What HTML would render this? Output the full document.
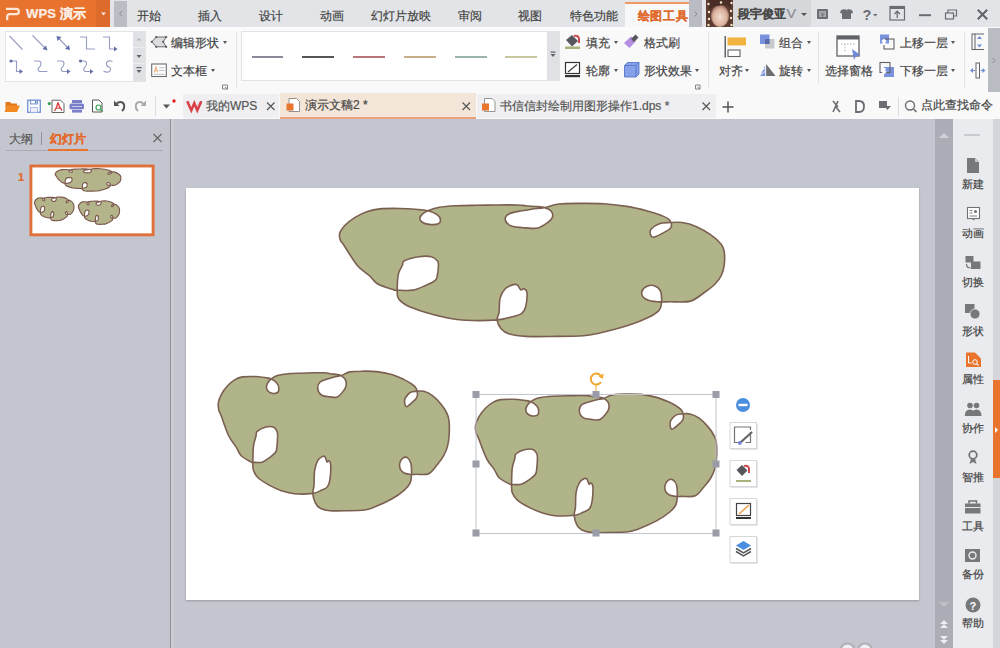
<!DOCTYPE html>
<html><head><meta charset="utf-8">
<style>
*{box-sizing:border-box;margin:0;padding:0}
html,body{width:1000px;height:648px;overflow:hidden;background:#c3c6ce;font-family:"Liberation Sans",sans-serif;font-size:12px;color:#333}
.a{position:absolute}
.t{position:absolute;white-space:nowrap;line-height:12px;-webkit-text-stroke:0.2px currentColor}
svg{position:absolute;left:0;top:0;overflow:visible}
</style></head><body>

<div class="a" style="left:0;top:0;width:1000px;height:27px;background:#e2e4e8"></div>
<div class="a" style="left:0;top:27px;width:1000px;height:4px;background:#fbfbfc"></div>
<div class="a" style="left:0;top:0;width:110px;height:27px;background:#e8732f"></div>
<div class="a" style="left:96px;top:0;width:14px;height:27px;background:#dd6b2b"></div>
<svg width="1000" height="30"><g fill="none" stroke="#fbe6d8" stroke-width="2.2">
<path d="M6,8.8 H16.3 Q18.8,8.8 18.8,11.3 V11.7 Q18.8,14.2 16.3,14.2 H9.7 Q7.2,14.2 7.2,16.7 V20.2"/></g>
<path d="M101,12.5 L106,12.5 L103.5,15.5Z" fill="#fbe6d8"/>
</svg>
<div class="t" style="left:26px;top:8px;color:#fcefe6;font-size:13px;font-weight:bold;letter-spacing:0.2px">WPS 演示</div>
<div class="a" style="left:114px;top:1px;width:13px;height:26px;background:#babdc4"></div>
<svg width="130" height="30"><path d="M122,11 L119.5,13.5 L122,16" fill="none" stroke="#8a8d94" stroke-width="1"/></svg>
<div class="t" style="left:137px;top:10px;color:#444;font-size:12px;">开始</div>
<div class="t" style="left:198px;top:10px;color:#444;font-size:12px;">插入</div>
<div class="t" style="left:259px;top:10px;color:#444;font-size:12px;">设计</div>
<div class="t" style="left:320px;top:10px;color:#444;font-size:12px;">动画</div>
<div class="t" style="left:371px;top:10px;color:#444;font-size:12px;">幻灯片放映</div>
<div class="t" style="left:458px;top:10px;color:#444;font-size:12px;">审阅</div>
<div class="t" style="left:518px;top:10px;color:#444;font-size:12px;">视图</div>
<div class="t" style="left:570px;top:10px;color:#444;font-size:12px;">特色功能</div>
<div class="a" style="left:625px;top:3px;width:64px;height:24px;background:#f7f8fa"></div>
<div class="a" style="left:625px;top:2px;width:64px;height:2px;background:#ee9866"></div>
<div class="t" style="left:637.5px;top:10px;color:#e06a2c;font-size:12px;font-weight:bold;letter-spacing:0.7px">绘图工具</div>
<div class="a" style="left:689px;top:0;width:13px;height:27px;background:#b9bcc3"></div>
<svg width="1000" height="30"><path d="M694.5,11.5 L697,14 L694.5,16.5" fill="none" stroke="#8a8d94" stroke-width="1"/></svg>
<svg width="1000" height="30">
<defs><radialGradient id="av" cx="0.5" cy="0.55" r="0.6"><stop offset="0" stop-color="#f3dcd0"/><stop offset="0.6" stop-color="#dcb4a0"/><stop offset="1" stop-color="#8a6050"/></radialGradient></defs>
<rect x="706" y="0" width="27" height="27" fill="#5c3b30"/>
<ellipse cx="720" cy="16" rx="9" ry="11" fill="url(#av)"/>
<path d="M709,0 H731 V8 Q726,4 720,5.5 Q713,6 709,10Z" fill="#4a2e26"/>
<g fill="#f4e8c8"><circle cx="708.5" cy="4" r="1.2"/><circle cx="709" cy="12" r="1.2"/><circle cx="709" cy="19" r="1.2"/><circle cx="708.5" cy="25" r="1.2"/><circle cx="731.5" cy="3" r="1.2"/><circle cx="731" cy="11" r="1.2"/><circle cx="731" cy="18" r="1.2"/><circle cx="731.5" cy="25" r="1.2"/><circle cx="721" cy="2.5" r="1.2"/></g>
</svg>
<div class="a" style="left:733px;top:0;width:78px;height:27px;background:#d5d7db"></div>
<div class="t" style="left:738px;top:8px;color:#4a4a4a;font-size:12px;font-weight:bold">段宇俊亚</div>
<div class="t" style="left:787px;top:8px;color:#8a8d94;font-size:13px;transform:scaleX(1.1)">V</div>
<div class="a" style="left:801px;top:13px;width:0;height:0;border-left:3.0px solid transparent;border-right:3.0px solid transparent;border-top:3.5px solid #555"></div>
<svg width="1000" height="30">
<g fill="#6b6d72">
<rect x="817" y="9" width="11" height="10" rx="1"/>
<path d="M841,10 L845,9 Q846.5,11 848,9 L852,10 L853,13 L851,13.5 V19 H842 V13.5 L840,13Z"/>
<path d="M902.5,14 l2.5,0 0,0" />
<path d="M919,14.2 H931 V16.2 H919Z"/>
</g>
<rect x="819" y="11" width="7" height="6" fill="#a9abb0"/>
<path d="M820.5,12 l2,2 2,-2 M822.5,14 v3 M820.5,15 h4" stroke="#6b6d72" stroke-width="0.8" fill="none"/>
<text x="862.5" y="19.5" font-size="14.5" font-weight="bold" fill="#6b6d72" font-family="Liberation Sans">?</text>
<path d="M873,14 h4.5 l-2.25,2.5z" fill="#6b6d72"/>
<rect x="890" y="6.5" width="14.5" height="13.5" fill="none" stroke="#6b6d72" stroke-width="1.2"/>
<rect x="890" y="6.5" width="14.5" height="2.5" fill="#6b6d72"/>
<path d="M897.2,18 V11.5 M894.5,14 L897.2,11.2 L900,14" fill="none" stroke="#6b6d72" stroke-width="1.3"/>
<rect x="945.5" y="13" width="8" height="6" fill="none" stroke="#6b6d72" stroke-width="1.2"/>
<path d="M948,13 V10 H956.5 V16 H953.5" fill="none" stroke="#6b6d72" stroke-width="1.2"/>
<path d="M977.8,9.8 L987.2,19.2 M987.2,9.8 L977.8,19.2" stroke="#5f6166" stroke-width="2"/>
</svg>
<div class="a" style="left:0;top:31px;width:1000px;height:61px;background:#f9f9fa"></div>
<div class="a" style="left:5px;top:31px;width:141px;height:51px;background:#fff;border:1px solid #e2e3e7"></div>
<div class="a" style="left:133px;top:32px;width:12px;height:49px;background:#dfe1e5"></div>
<div class="a" style="left:133px;top:47px;width:12px;height:1px;background:#eceef0"></div>
<div class="a" style="left:133px;top:63px;width:12px;height:1px;background:#eceef0"></div>
<svg width="1000" height="100"><g fill="none" stroke="#979dc2" stroke-width="1.1">
<path d="M9.5,36 L22.5,49.5"/>
<path d="M32.5,35.5 L46,49"/>
<path d="M58,37.5 L68.5,48.5"/>
<path d="M80,37 H86.5 V49 H95"/>
<path d="M103,37 H109.5 V49 H115.5"/>
<path d="M12,61 H16.5 V71.5 H21.5"/>
<path d="M34,61 H38.5 Q41,61 41,63.5 Q41,66 39,67.5 Q37,69.5 39.5,71.5 H47.5"/>
<path d="M57,61 H61.5 Q64,61 64,63.5 Q64,66 62,67.5 Q60,69.5 62.5,71.5 H69"/>
<path d="M81,61 H84 Q86.5,61 86.5,63.5 Q86.5,66 84.5,67.5 Q82.5,69.5 85,71.5 H92"/>
<path d="M112.5,61.5 Q108,59.5 106.5,63 Q106,66 109,67 Q112,68.5 109.5,71.5 Q107,73 103.5,71"/>
</g>
<g fill="#6470a8">
<path d="M47.5,50.5 L42.5,49 L46,45.5Z"/>
<path d="M56.5,36 L61.5,37 L57.5,41Z"/><path d="M70,50 L65,49 L69,45Z"/>
<path d="M117.5,49 L114,46.5 V51.5Z"/>
<circle cx="11" cy="61" r="1.6"/><path d="M23,71.5 L19.5,69 V74Z"/>
<path d="M70.5,71.5 L67,69 V74Z"/>
<circle cx="80.5" cy="61" r="1.6"/><path d="M93.5,71.5 L90,69 V74Z"/>
</g>
<g fill="#606368">
<path d="M136.5,40.5 L139,38 L141.5,40.5Z" fill="#b4b7bc"/>
<path d="M136.5,55 H141.5 L139,58Z"/>
<path d="M136.5,70 H141.5 L139,73Z"/><rect x="136.5" y="67" width="5" height="1.2"/>
</g>
</svg>
<svg width="1000" height="100">
<path d="M151.8,41.8 L156.2,37 H166.2 L163.2,41.8 L166.2,46.8 H156.2Z" fill="#dcdcde" stroke="#6a6c70" stroke-width="1"/><g fill="#55575b"><circle cx="151.8" cy="41.8" r="1.1"/><circle cx="156.2" cy="37" r="1.1"/><circle cx="166.2" cy="37" r="1.1"/><circle cx="163.2" cy="41.8" r="1.1"/><circle cx="166.2" cy="46.8" r="1.1"/><circle cx="156.2" cy="46.8" r="1.1"/></g>
<rect x="151.7" y="64" width="14.6" height="12.5" fill="#fff" stroke="#6a6c70" stroke-width="1.1"/>
<path d="M154.2,72.5 L156,66.8 L157.8,72.5 M154.9,70.7 H157.1" stroke="#f2b080" stroke-width="1.1" fill="none"/>
<path d="M159,67.8 H164.5 M159,70.5 H164.5 M154,74.3 H164.5" stroke="#b4b7bd" stroke-width="0.9"/>
<path d="M222.5,85 h5 v4 h-5z" fill="none" stroke="#777" stroke-width="0.9"/><path d="M225,87 l2.5,2" stroke="#777" stroke-width="0.9"/>
</svg>
<div class="t" style="left:171px;top:37px;color:#444;font-size:12px;">编辑形状</div>
<div class="a" style="left:223px;top:41px;width:0;height:0;border-left:2.5px solid transparent;border-right:2.5px solid transparent;border-top:3.0px solid #555"></div>
<div class="t" style="left:171px;top:65px;color:#444;font-size:12px;">文本框</div>
<div class="a" style="left:211px;top:69px;width:0;height:0;border-left:2.5px solid transparent;border-right:2.5px solid transparent;border-top:3.0px solid #555"></div>
<div class="a" style="left:236px;top:32px;width:1px;height:56px;background:#e0e2e6"></div>
<div class="a" style="left:241px;top:31px;width:319px;height:50px;background:#fff;border:1px solid #e2e3e7"></div>
<div class="a" style="left:547px;top:32px;width:12px;height:48px;background:#dfe1e5"></div>
<svg width="1000" height="100">
<g stroke-width="2">
<path d="M252,57 H283" stroke="#8e8898"/>
<path d="M302,57 H334" stroke="#555"/>
<path d="M353,57 H385" stroke="#b87478"/>
<path d="M404,57 H436" stroke="#c6b08a"/>
<path d="M455,57 H487" stroke="#9ab4ae"/>
<path d="M505,57 H537" stroke="#c8c8a0"/>
</g>
<path d="M550.5,54 H555.5 L553,57Z" fill="#606368"/><rect x="550.5" y="51.5" width="5" height="1.2" fill="#606368"/>
</svg>
<svg width="1000" height="100">
<path d="M566,40 L572,35 L578,41 L572,46.5Z" fill="#55575c"/>
<path d="M574,36 Q578,35 579,38.5 V43" fill="none" stroke="#d04a50" stroke-width="2"/>
<rect x="565" y="46.5" width="15" height="2.5" fill="#a9b27a"/>
<path d="M624,43 L631,36.5 L636,41 L629.5,48Z" fill="#b48ee0"/>
<path d="M631,39 L635.5,34.5 L638.5,37.5 L634,42Z" fill="#55575c"/>
<rect x="565.5" y="62.5" width="14" height="11" fill="#fff" stroke="#333" stroke-width="1.2"/>
<path d="M568,72 L577,64.5" stroke="#444" stroke-width="1.3"/>
<rect x="565" y="75" width="15" height="2.2" fill="#333"/>
<path d="M624.5,65.5 L627.5,62.5 H639 V74 L636,77 H624.5Z" fill="#86a0ea" stroke="#5577cc" stroke-width="0.9"/>
<path d="M624.5,65.5 H636 V77 M636,65.5 L639,62.5" fill="none" stroke="#5577cc" stroke-width="0.9"/>
<path d="M695.5,85 h4.5 v4 h-4.5z" fill="none" stroke="#777" stroke-width="0.9"/><path d="M697.5,87 l2.5,2" stroke="#777" stroke-width="0.9"/>
</svg>
<div class="t" style="left:586px;top:37px;color:#444;font-size:12px;">填充</div>
<div class="a" style="left:614px;top:41px;width:0;height:0;border-left:2.5px solid transparent;border-right:2.5px solid transparent;border-top:3.0px solid #555"></div>
<div class="t" style="left:644px;top:37px;color:#444;font-size:12px;">格式刷</div>
<div class="t" style="left:586px;top:65px;color:#444;font-size:12px;">轮廓</div>
<div class="a" style="left:614px;top:69px;width:0;height:0;border-left:2.5px solid transparent;border-right:2.5px solid transparent;border-top:3.0px solid #555"></div>
<div class="t" style="left:644px;top:65px;color:#444;font-size:12px;">形状效果</div>
<div class="a" style="left:695px;top:69px;width:0;height:0;border-left:2.5px solid transparent;border-right:2.5px solid transparent;border-top:3.0px solid #555"></div>
<div class="a" style="left:708px;top:32px;width:1px;height:56px;background:#e0e2e6"></div>
<svg width="1000" height="100">
<rect x="724.5" y="36" width="1.5" height="21.5" fill="#606368"/>
<rect x="727.5" y="37.5" width="18.5" height="8" fill="#f2b440"/>
<rect x="728" y="50" width="12" height="6.5" fill="#fff" stroke="#606368" stroke-width="1.1"/>
<rect x="765" y="39" width="9.5" height="9.5" fill="#c8c9cc"/>
<rect x="760" y="34.5" width="9.5" height="9.5" fill="#7a92dd"/>
<rect x="765" y="39" width="4.5" height="5" fill="#5a6aa8"/>
<path d="M766.2,76 V64 L775.5,76Z" fill="#6a6c70"/>
<path d="M760.2,76 L765.2,65.5 V76Z" fill="#7a92dd"/>
<path d="M761.5,74.5 L765.5,71 M763,70 L765.5,68" stroke="#fff" stroke-width="0.9"/>
<rect x="837" y="36" width="22" height="20" fill="#fff" stroke="#606368" stroke-width="1.3"/>
<rect x="837" y="36" width="22" height="3.5" fill="#606368"/>
<path d="M841,44 h14 M845,44 v9" stroke="#a0a4ac" stroke-width="0.8" stroke-dasharray="1.5 1.5"/>
<path d="M852,49 L860.5,55 L856,56 L854,60Z" fill="#6f8ad8"/>
<rect x="880" y="34.5" width="9" height="9" fill="#7a92dd"/>
<rect x="884" y="39" width="10" height="10" fill="none" stroke="#606368" stroke-width="1.1"/>
<path d="M884,38.5 L887,41.5 H885.5 V45 H882.5 V41.5 H881Z" fill="#fff"/>
<rect x="884" y="67" width="10" height="10" fill="#7a92dd"/>
<rect x="880" y="62.5" width="10" height="10" fill="none" stroke="#606368" stroke-width="1.1"/>
<path d="M887,71.5 L884,74.5 L881,71.5 H882.5 V68 H885.5 V71.5Z" fill="#fff"/>
<rect x="972" y="34" width="3" height="15.5" fill="none" stroke="#606368" stroke-width="1"/>
<path d="M975,34 H984 M975,49.5 H984" stroke="#606368" stroke-width="1"/>
<path d="M979.5,36 L982,39 H977Z M979.5,47.5 L982,44.5 H977Z" fill="#6f8ad8"/>
<rect x="976" y="63" width="3.5" height="15" fill="#fff" stroke="#606368" stroke-width="1"/>
<path d="M970,70.5 L973,68 V73Z M985.5,70.5 L982.5,68 V73Z" fill="#6f8ad8"/><path d="M971,70.5 H975 M980.5,70.5 H985" stroke="#6f8ad8" stroke-width="1"/>
</svg>
<div class="t" style="left:719px;top:65px;color:#444;font-size:12px;">对齐</div>
<div class="a" style="left:745px;top:69px;width:0;height:0;border-left:2.5px solid transparent;border-right:2.5px solid transparent;border-top:3.0px solid #555"></div>
<div class="t" style="left:779px;top:37px;color:#444;font-size:12px;">组合</div>
<div class="a" style="left:807px;top:41px;width:0;height:0;border-left:2.5px solid transparent;border-right:2.5px solid transparent;border-top:3.0px solid #555"></div>
<div class="t" style="left:779px;top:65px;color:#444;font-size:12px;">旋转</div>
<div class="a" style="left:807px;top:69px;width:0;height:0;border-left:2.5px solid transparent;border-right:2.5px solid transparent;border-top:3.0px solid #555"></div>
<div class="a" style="left:818px;top:32px;width:1px;height:52px;background:#e0e2e6"></div>
<div class="t" style="left:825px;top:65px;color:#444;font-size:12px;">选择窗格</div>
<div class="t" style="left:900px;top:37px;color:#444;font-size:12px;">上移一层</div>
<div class="a" style="left:951px;top:41px;width:0;height:0;border-left:2.5px solid transparent;border-right:2.5px solid transparent;border-top:3.0px solid #555"></div>
<div class="t" style="left:900px;top:65px;color:#444;font-size:12px;">下移一层</div>
<div class="a" style="left:951px;top:69px;width:0;height:0;border-left:2.5px solid transparent;border-right:2.5px solid transparent;border-top:3.0px solid #555"></div>
<div class="a" style="left:964px;top:32px;width:1px;height:56px;background:#e0e2e6"></div>
<div class="a" style="left:988px;top:28px;width:12px;height:64px;background:#b9bcc3"></div>
<svg width="1000" height="100"><path d="M992.5,58 L995,60.5 L992.5,63" fill="none" stroke="#8a8d94" stroke-width="1"/></svg>
<div class="a" style="left:0;top:92px;width:1000px;height:27px;background:#f9f9fa"></div>
<svg width="1000" height="130">
<path d="M5.5,102 H10 L11.5,103.5 H17 V106 H7.5 L5.5,111Z" fill="#e07a1a"/>
<path d="M7.5,105.5 H20 L17,112 H4.5Z" fill="#f18a22"/>
<rect x="27.7" y="100.3" width="12.6" height="12" fill="#fff" stroke="#7b98d6" stroke-width="1.4"/>
<rect x="30.5" y="100.3" width="7" height="3.6" fill="#fff" stroke="#7b98d6" stroke-width="1.1"/>
<rect x="35" y="101" width="1.3" height="2.2" fill="#5a70b0"/>
<rect x="30.5" y="107.5" width="7" height="4.8" fill="#eef1fa" stroke="#9bb0e0" stroke-width="0.8"/>
<path d="M52,100.2 H60.5 L64,103.7 V112.5 H52Z" fill="#fff" stroke="#666" stroke-width="1"/>
<path d="M54.5,111 Q57,107 58,102.5 Q59,107 62,110.5 M55.5,108.5 Q58,107.5 61,108.5" fill="none" stroke="#d83a3a" stroke-width="1.2"/>
<circle cx="49.3" cy="103.6" r="1.6" fill="#3aa050"/>
<rect x="72" y="100" width="10" height="3" fill="#7b7ec8"/>
<rect x="69.5" y="103.5" width="14.5" height="5.8" rx="1.5" fill="#7b7ec8"/>
<rect x="72" y="106" width="10" height="1" fill="#c8caf0"/>
<rect x="72" y="109.8" width="10" height="2.8" fill="#7b7ec8"/>
<path d="M92.5,100 H99 L102,103 V112 H92.5Z" fill="#fff" stroke="#555" stroke-width="1"/>
<circle cx="98.5" cy="107.5" r="2.5" fill="none" stroke="#3aa050" stroke-width="1.2"/><path d="M100.5,109.5 l2,2" stroke="#3aa050" stroke-width="1.3"/>
<path d="M122,111 Q125,108.5 124,104.5 Q122.5,101 118,102.5 L116.5,104" fill="none" stroke="#555" stroke-width="2"/>
<path d="M114,100.5 V106 H119.5Z" fill="#555"/>
<path d="M138,111 Q135,108.5 136,104.5 Q137.5,101 142,102.5 L143.5,104" fill="none" stroke="#aaa" stroke-width="2"/>
<path d="M146,100.5 V106 H140.5Z" fill="#aaa"/>
<rect x="155" y="96" width="1" height="20" fill="#dcdde0"/>
<path d="M163,104.5 H170 L166.5,108.5Z" fill="#555"/>
<circle cx="174" cy="101" r="1.7" fill="#e02020"/>
</svg>
<div class="a" style="left:183px;top:94px;width:96px;height:24px;background:#efeff1"></div>
<div class="a" style="left:280px;top:93px;width:196px;height:25px;background:#f3e6d9"></div>
<div class="a" style="left:280px;top:116.5px;width:196px;height:2px;background:#e9a27a"></div>
<div class="a" style="left:477px;top:94px;width:239px;height:24px;background:#efeff1"></div>
<svg width="1000" height="130">
<path d="M187.3,101.3 L191.3,110.2 L194.3,103.2 L197.3,110.2 L201.3,101.3" fill="none" stroke="#d8404a" stroke-width="2.6" stroke-linejoin="miter"/><path d="M189.7,102.5 L191.4,106.5 M198.5,102.5 L197.2,105.8" stroke="#f4c8c8" stroke-width="0.8"/>
<g stroke="#555" stroke-width="1.2"><path d="M267,102.5 L274.5,110 M274.5,102.5 L267,110"/><path d="M462.5,102.5 L470,110 M470,102.5 L462.5,110"/><path d="M702.5,102.5 L710,110 M710,102.5 L702.5,110"/></g>
<path d="M728,101.5 V112.5 M722.5,107 H733.5" stroke="#555" stroke-width="1.5"/>
<g><path d="M289,98.5 H296.5 L299.5,101.5 V111.5 H289Z" fill="#fff" stroke="#888" stroke-width="0.9"/>
<rect x="286.5" y="103.5" width="7" height="7" fill="#e8742e"/></g>
<g><path d="M484.5,98.5 H492 L495,101.5 V111.5 H484.5Z" fill="#fff" stroke="#888" stroke-width="0.9"/>
<rect x="482" y="103.5" width="7" height="7" fill="#e8742e"/></g>
</svg>
<div class="t" style="left:206px;top:100px;color:#555;font-size:12px;">我的WPS</div>
<div class="t" style="left:305px;top:99px;color:#444;font-size:12px;">演示文稿2 *</div>
<div class="t" style="left:500px;top:100px;color:#555;font-size:12px;">书信信封绘制用图形操作1.dps *</div>
<svg width="1000" height="130">
<path d="M833,101 L838,107 M838,101 L833,112 M835,106 L840,112" stroke="#6b6d72" stroke-width="1.6" fill="none"/>
<path d="M856,101 H859 Q864,101 864,106.5 Q864,112 859,112 H856Z" fill="none" stroke="#6b6d72" stroke-width="1.8"/>
<rect x="879" y="101" width="8" height="7" fill="#6b6d72"/><path d="M884,106 H891 L887.5,110Z" fill="#6b6d72"/>
<rect x="898" y="97" width="1" height="19" fill="#dcdde0"/>
<circle cx="910" cy="105.5" r="4.5" fill="none" stroke="#6b6d72" stroke-width="1.4"/><path d="M913.5,109 l3,3" stroke="#6b6d72" stroke-width="1.6"/>
</svg>
<div class="t" style="left:921px;top:99px;color:#444;font-size:12px;">点此查找命令</div>
<div class="a" style="left:0;top:119px;width:1000px;height:529px;background:#c3c6ce"></div>
<div class="a" style="left:170px;top:119px;width:1px;height:529px;background:#8f929a"></div>
<div class="t" style="left:8.5px;top:133px;color:#555;font-size:12px;">大纲</div>
<div class="a" style="left:41px;top:132px;width:1px;height:13px;background:#8f929a"></div>
<div class="t" style="left:50px;top:133px;color:#e4692a;font-size:12px;font-weight:bold">幻灯片</div>
<svg width="1000" height="160"><path d="M153.5,134 L161.5,142 M161.5,134 L153.5,142" stroke="#666" stroke-width="1.2"/></svg>
<div class="a" style="left:6px;top:150px;width:157px;height:1px;background:#a9acb4"></div>
<div class="a" style="left:48px;top:149px;width:40px;height:2px;background:#e8742e"></div>
<div class="t" style="left:18px;top:171px;color:#e26a2a;font-size:11px;font-weight:bold">1</div>
<div class="a" style="left:30px;top:165px;width:124px;height:71px;background:#fff"></div>
<div class="a" style="left:171px;top:119px;width:3px;height:529px;background:#c9ccd3"></div>
<div class="a" style="left:186px;top:188px;width:733px;height:412px;background:#fff;box-shadow:0 1px 2px rgba(0,0,0,0.22)"></div>
<div class="a" style="left:935px;top:119px;width:18px;height:529px;background:#abaeb6"></div>
<svg width="1000" height="648">
<path d="M939,138 L944,133 L949,138Z" fill="#d0d2d8"/>
<path d="M939,602 L944,607 L949,602Z" fill="#bfc1c7"/>
<path d="M940,624 L944,620 L948,624Z M940,628 L944,624 L948,628Z" fill="#eceef2"/>
<path d="M940,636 L944,640 L948,636Z M940,640 L944,644 L948,640Z" fill="#eceef2"/>
</svg>
<div class="a" style="left:953px;top:119px;width:40px;height:529px;background:#e9ebee"></div>
<div class="a" style="left:993px;top:119px;width:7px;height:529px;background:#d3d5da"></div>
<div class="a" style="left:993px;top:380px;width:7px;height:98px;background:#e8742e"></div>
<div class="a" style="left:964px;top:134px;width:16px;height:1.5px;background:#c8cacf"></div>
<div class="t" style="left:962px;top:178px;color:#444;font-size:11px;">新建</div>
<div class="t" style="left:962px;top:227px;color:#444;font-size:11px;">动画</div>
<div class="t" style="left:962px;top:276px;color:#444;font-size:11px;">切换</div>
<div class="t" style="left:962px;top:325px;color:#444;font-size:11px;">形状</div>
<div class="t" style="left:962px;top:373px;color:#444;font-size:11px;">属性</div>
<div class="t" style="left:962px;top:422px;color:#444;font-size:11px;">协作</div>
<div class="t" style="left:962px;top:471px;color:#444;font-size:11px;">智推</div>
<div class="t" style="left:962px;top:520px;color:#444;font-size:11px;">工具</div>
<div class="t" style="left:962px;top:568px;color:#444;font-size:11px;">备份</div>
<div class="t" style="left:962px;top:617px;color:#444;font-size:11px;">帮助</div>
<svg width="1000" height="648">
<g fill="#77787c">
<path d="M967,158 H975 L979,162 V173 H967Z"/>
<rect x="967.5" y="207.5" width="12" height="11" fill="#fff" stroke="#717276" stroke-width="1.1"/>
<path d="M969.5,210.5 h3 M969.5,213 h3 M969.5,216 h7.5" stroke="#717276" stroke-width="0.9" fill="none"/>
<circle cx="975.5" cy="211.5" r="1.6"/>
<path d="M971.5,218.5 l2,2 2,-2z"/>
<rect x="965.5" y="256" width="8" height="6.5"/><rect x="971" y="261.5" width="9.5" height="7.5"/>
<path d="M966.5,264 Q966.5,268 970.5,268" fill="none" stroke="#717276" stroke-width="1.2"/>
<rect x="965" y="304" width="9.5" height="9"/><circle cx="975" cy="314" r="5" stroke="#e9ebee" stroke-width="0.8"/>
<path d="M966,352.5 H975 L981,358.5 V367 H966Z" fill="#e8742e"/>
<circle cx="970" cy="405.5" r="2.8"/><circle cx="976.5" cy="405.5" r="2.8"/>
<path d="M964.8,416 Q964.8,409.5 970,409.5 Q975.2,409.5 975.2,416Z M971.5,416 Q971.5,409.5 976.5,409.5 Q981.5,409.5 981.5,416Z"/>
<circle cx="973" cy="455" r="3.8" fill="none" stroke="#717276" stroke-width="1.7"/>
<path d="M971,458.5 L969.5,464 L973,462 L976.5,464 L975,458.5Z"/>
<rect x="965" y="503.5" width="15.5" height="10"/><path d="M969,503.5 V501 H976.5 V503.5" fill="none" stroke="#717276" stroke-width="1.5"/>
<rect x="965" y="507" width="15.5" height="1" fill="#e9ebee"/>
<rect x="965" y="549" width="15" height="13"/>
<circle cx="973" cy="605" r="7.5"/>
</g>
<circle cx="972.5" cy="555.5" r="3.5" fill="none" stroke="#e9ebee" stroke-width="1.4"/>
<path d="M975,158 L979,162 H975Z" fill="#c5c7cb"/>
<text x="969.5" y="609.5" font-size="11" font-weight="bold" fill="#fff" font-family="Liberation Sans">?</text>
<circle cx="975" cy="362" r="2.3" fill="none" stroke="#fff" stroke-width="1"/><path d="M976.6,363.6 l2,2" stroke="#fff" stroke-width="1.1"/>
<path d="M968.5,356 v7 h3" fill="none" stroke="#fff" stroke-width="1"/>
<path d="M995,427 L998,430 L995,433Z" fill="#fff"/>
</svg>
<svg width="1000" height="648">
<defs><path id="shp" d="M220.8,414.8 C219.2,410.5 219.3,412.4 218.9,410.4 C218.5,408.4 217.9,405.7 218.3,403.0 C218.7,400.3 219.9,397.3 221.4,394.4 C222.9,391.5 225.3,388.3 227.6,385.8 C229.9,383.3 232.5,381.1 235.0,379.6 C237.5,378.1 239.1,377.4 242.4,376.9 C245.7,376.4 250.8,376.4 254.7,376.5 C258.6,376.6 263.1,377.3 265.9,377.7 C268.7,378.1 269.5,378.1 271.4,379.0 C273.2,379.9 275.8,381.8 277.0,383.3 C278.2,384.8 278.7,386.7 278.8,388.2 C278.9,389.7 278.7,391.7 277.6,392.5 C276.5,393.3 273.6,393.5 272.0,393.2 C270.4,392.9 268.6,391.8 267.7,390.7 C266.8,389.6 266.4,387.8 266.5,386.4 C266.6,384.9 267.4,383.4 268.3,382.0 C269.2,380.6 270.4,379.4 272.0,378.3 C273.6,377.2 275.5,376.1 278.2,375.3 C280.9,374.5 284.3,374.1 288.0,373.7 C291.7,373.3 296.3,373.3 300.4,373.2 C304.5,373.1 308.7,372.9 312.8,372.8 C316.9,372.7 322.1,372.7 325.0,372.8 C327.9,372.9 327.9,373.4 330.0,373.7 C332.1,374.0 335.5,374.3 337.4,374.6 C339.2,374.9 339.8,374.8 341.1,375.6 C342.4,376.4 344.6,377.9 345.4,379.6 C346.2,381.3 346.3,384.0 346.0,385.8 C345.7,387.6 345.0,388.9 343.6,390.7 C342.2,392.5 339.7,395.9 337.4,396.9 C335.1,397.9 332.7,397.2 330.0,396.9 C327.3,396.6 323.4,396.4 321.4,395.0 C319.3,393.6 317.9,390.4 317.7,388.2 C317.5,386.0 318.5,383.5 320.2,382.0 C321.9,380.5 325.3,379.8 327.6,379.0 C329.9,378.2 331.8,377.7 334.0,377.1 C336.2,376.5 338.5,376.5 341.1,375.6 C343.7,374.7 346.5,372.6 349.8,371.9 C353.1,371.2 356.4,371.2 360.9,371.2 C365.4,371.1 371.8,371.0 376.9,371.6 C382.0,372.2 387.2,373.3 391.7,374.6 C396.2,375.9 400.8,378.1 404.1,379.6 C407.4,381.2 409.4,382.4 411.5,383.9 C413.6,385.4 415.5,386.6 416.4,388.8 C417.3,391.0 417.8,394.5 417.0,396.9 C416.2,399.3 413.2,401.4 411.5,403.0 C409.8,404.6 407.6,406.7 406.5,406.7 C405.4,406.7 404.9,404.4 404.7,403.0 C404.5,401.6 404.4,399.9 405.3,398.1 C406.2,396.4 408.4,393.6 410.2,392.5 C412.0,391.4 414.1,391.5 416.4,391.3 C418.7,391.1 421.1,390.6 423.8,391.3 C426.5,392.0 429.6,393.4 432.5,395.6 C435.4,397.8 438.6,401.2 441.1,404.3 C443.6,407.4 446.0,411.2 447.3,414.1 C448.6,417.0 448.8,418.0 449.1,421.6 C449.4,425.2 449.4,431.8 449.1,436.0 C448.8,440.2 448.2,443.8 447.3,447.1 C446.4,450.4 445.2,452.9 443.6,455.8 C442.0,458.7 439.9,461.4 437.4,464.4 C434.9,467.4 432.3,472.0 428.8,473.7 C425.3,475.4 419.4,474.2 416.4,474.3 C413.4,474.4 412.9,474.7 410.9,474.5 C408.8,474.3 405.9,473.9 404.1,473.0 C402.4,472.1 401.1,470.9 400.4,469.3 C399.7,467.7 399.4,465.1 399.8,463.2 C400.2,461.3 401.6,459.1 402.8,458.2 C404.0,457.3 405.9,456.8 407.2,457.6 C408.5,458.4 410.2,460.4 410.9,463.2 C411.6,466.0 411.6,471.2 411.5,474.5 C411.4,477.8 411.4,480.3 410.2,482.9 C409.0,485.5 407.2,487.6 404.1,490.3 C401.0,493.0 396.9,496.1 391.7,499.0 C386.5,501.9 377.7,505.8 373.2,507.6 C368.7,509.4 368.7,509.5 364.6,510.0 C360.5,510.5 354.3,510.6 348.5,510.7 C342.7,510.8 334.7,511.1 330.0,510.7 C325.3,510.3 322.7,509.5 320.2,508.2 C317.7,506.9 316.4,505.2 315.2,502.7 C314.0,500.2 313.0,496.3 312.8,493.4 C312.6,490.5 313.7,489.2 314.0,485.4 C314.3,481.6 314.0,474.7 314.6,470.6 C315.2,466.5 316.4,463.1 317.7,460.7 C319.0,458.3 321.4,457.0 322.6,456.4 C323.8,455.8 324.4,456.1 325.1,457.0 C325.8,457.9 326.4,461.3 327.0,461.9 C327.6,462.5 328.2,460.3 328.8,460.7 C329.4,461.1 330.5,461.3 330.7,464.4 C330.9,467.5 330.5,475.5 330.0,479.2 C329.5,482.9 329.0,484.8 327.6,486.6 C326.2,488.5 323.9,489.2 321.4,490.3 C318.9,491.4 317.3,492.8 312.8,493.4 C308.3,494.0 299.4,494.2 294.2,493.8 C289.0,493.4 286.0,492.3 281.9,490.9 C277.8,489.5 273.5,487.5 269.6,485.4 C265.7,483.2 261.1,480.5 258.4,478.0 C255.7,475.5 254.4,473.2 253.5,470.6 C252.6,468.0 252.9,466.3 252.9,462.2 C252.9,458.1 253.0,450.3 253.5,445.9 C254.0,441.5 255.4,438.4 256.0,436.0 C256.6,433.6 255.5,432.9 257.2,431.4 C258.8,429.9 263.2,427.8 265.9,427.1 C268.6,426.4 271.4,426.4 273.3,427.1 C275.2,427.8 276.3,429.9 277.0,431.4 C277.7,432.9 277.6,433.6 277.6,436.0 C277.6,438.4 277.3,443.2 277.0,445.9 C276.7,448.6 276.9,450.1 275.7,452.0 C274.5,453.9 271.9,455.9 269.6,457.6 C267.3,459.3 264.9,461.4 262.1,462.2 C259.3,463.0 254.8,462.2 252.9,462.2 C251.1,462.1 252.9,463.0 251.0,461.9 C249.1,460.8 243.7,458.3 241.2,455.8 C238.7,453.3 238.3,450.4 236.2,447.1 C234.1,443.8 231.4,441.4 228.8,436.0 C226.2,430.6 222.5,419.1 220.8,414.8Z" vector-effect="non-scaling-stroke"/></defs>
<g fill="#b1b389" stroke="#7b6052" stroke-width="1.6" fill-rule="evenodd" stroke-linejoin="round">
<use href="#shp" transform="matrix(1.66638,0,0,0.95341,-24.170,-150.504)" vector-effect="non-scaling-stroke"/>
<use href="#shp" transform="matrix(1,0,0,1,0,0)"/>
<use href="#shp" transform="matrix(1.04419,0,0,0.99283,247.552,25.461)"/>
</g>
</svg>
<svg width="1000" height="648">
<defs><clipPath id="thc"><rect x="32" y="167.5" width="120" height="66"/></clipPath></defs><g clip-path="url(#thc)"><g transform="matrix(0.1706,0,0,0.169,-2.74,134.3)" fill="#b3b48a" stroke="#7d5a50" stroke-width="1.15" fill-rule="evenodd">
<use href="#shp" transform="matrix(1.66638,0,0,0.95341,-24.170,-150.504)"/>
<use href="#shp" transform="matrix(1,0,0,1,0,0)"/>
<use href="#shp" transform="matrix(1.04419,0,0,0.99283,247.552,25.461)"/>
</g></g>
<rect x="30.9" y="166" width="122.2" height="68.8" fill="none" stroke="#e0703a" stroke-width="2.9"/>
</svg>
<svg width="1000" height="648">
<rect x="476" y="394.5" width="240" height="139" fill="none" stroke="#c4c6ce" stroke-width="1"/>
<path d="M596,391 V384" stroke="#f0a830" stroke-width="1"/>
<g fill="#9a9ca8">
<rect x="472.5" y="391" width="7" height="7"/><rect x="592.5" y="391" width="7" height="7"/><rect x="712.5" y="391" width="7" height="7"/>
<rect x="472.5" y="460.5" width="7" height="7"/><rect x="712.5" y="460.5" width="7" height="7"/>
<rect x="472.5" y="529.5" width="7" height="7"/><rect x="592.5" y="529.5" width="7" height="7"/><rect x="712.5" y="529.5" width="7" height="7"/>
</g>
<path d="M600.5,375.5 A5.5,5.5 0 1 0 601,382" fill="none" stroke="#f0a830" stroke-width="2"/>
<path d="M598.5,376.5 L603.5,373.5 L603,379Z" fill="#f0a830"/>
</svg>
<svg width="1000" height="648">
<circle cx="743" cy="405" r="7" fill="#4a8ee0"/><rect x="738.5" y="403.8" width="9" height="2.4" fill="#fff"/>
<g fill="#e4e5e8">
<rect x="731" y="423.5" width="27" height="26.5"/><rect x="731" y="461.5" width="27" height="26.5"/><rect x="731" y="499.5" width="27" height="26.5"/><rect x="731" y="537.5" width="27" height="26.5"/>
</g>
<g fill="#fff" stroke="#d6d8dc" stroke-width="1">
<rect x="730" y="422.5" width="26.5" height="26"/>
<rect x="730" y="460.5" width="26.5" height="26"/>
<rect x="730" y="498.5" width="26.5" height="26"/>
<rect x="730" y="536.5" width="26.5" height="26"/>
</g>
<path d="M750.5,432 V442.5 H745.5 M740,442.5 H734.5 V427 H750.5 V430" fill="none" stroke="#747474" stroke-width="1.2"/>
<path d="M751.5,432.5 L741,442" stroke="#666" stroke-width="2.2" stroke-linecap="round"/>
<circle cx="739.8" cy="443" r="1.9" fill="#7a86d8"/>
<path d="M736.5,470 L742,465 L747.5,470.5 L742,476Z" fill="#55575c"/>
<path d="M744,466 Q748,465 749,468.5 V473" fill="none" stroke="#d04a50" stroke-width="2"/>
<rect x="736" y="480" width="15" height="2" fill="#a9b27a"/>
<rect x="736.5" y="503.5" width="14" height="12" fill="#fff" stroke="#444" stroke-width="1.2"/>
<path d="M739,514 L749,505" stroke="#f0a050" stroke-width="1.6"/>
<rect x="736" y="517" width="15" height="2" fill="#333"/>
<path d="M743.5,541 L751,545.5 L743.5,550 L736,545.5Z" fill="#4a8ee0"/>
<path d="M736,548.5 L743.5,553 L751,548.5" fill="none" stroke="#55575c" stroke-width="1.5"/>
<path d="M736,551.5 L743.5,556 L751,551.5" fill="none" stroke="#55575c" stroke-width="1.5"/>
</svg>
<svg width="1000" height="660"><g fill="#eef0f4" stroke="#aeb1b9" stroke-width="2.2"><circle cx="847.5" cy="650.5" r="7"/><circle cx="865" cy="650.5" r="7"/></g></svg>
</body></html>
